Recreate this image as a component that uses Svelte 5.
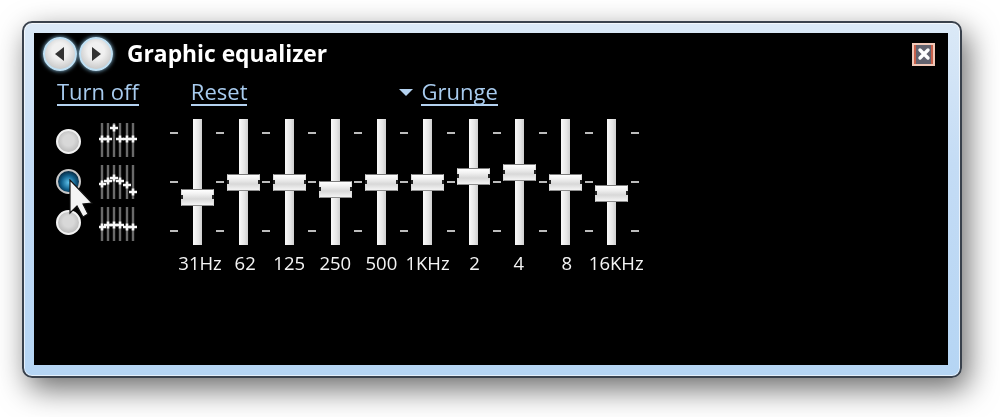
<script>
  // slider tops are px from the top of the track
  const bands = [
    { label: "31Hz", top: 70, nudge: 3 },
    { label: "62", top: 55, nudge: 2 },
    { label: "125", top: 55, nudge: 0 },
    { label: "250", top: 62, nudge: 0 },
    { label: "500", top: 55, nudge: 0 },
    { label: "1KHz", top: 55, nudge: 0 },
    { label: "2", top: 49, nudge: 1 },
    { label: "4", top: 45, nudge: -1 },
    { label: "8", top: 55, nudge: 1 },
    { label: "16KHz", top: 66, nudge: 0 }
  ];

  const presets = [
    { on: false, points: [16, 16, 5, 16, 16, 16] },
    { on: true, points: [19, 16, 13, 16, 20, 27] },
    { on: false, points: [20, 18, 18, 18, 20, 20] }
  ];

  const lineX = [3, 9, 15, 21, 28, 34];
</script>

<div class="page">
  <div class="window">
    <div class="pane">
      <header class="header">
        <div class="nav">
          <button class="round" aria-label="Back">
            <svg width="12" height="16" viewBox="0 0 12 16"><path d="M10 1 L1 8 L10 15 Z" fill="#333" /></svg>
          </button>
          <button class="round" aria-label="Forward">
            <svg width="12" height="16" viewBox="0 0 12 16"><path d="M2 1 L11 8 L2 15 Z" fill="#333" /></svg>
          </button>
        </div>
        <h1 class="title">Graphic equalizer</h1>
        <button class="close" aria-label="Close">
          <svg width="14" height="14" viewBox="0 0 14 14">
            <path d="M3 3 L11 11 M11 3 L3 11" stroke="#fff" stroke-width="3.4" stroke-linecap="round" />
          </svg>
        </button>
      </header>

      <nav class="links">
        <span class="link off">Turn off</span>
        <span class="link reset">Reset</span>
        <span class="arrow"></span>
        <span class="link">Grunge</span>
      </nav>

      <div class="body">
        <div class="presets">
          {#each presets as p}
            <div class="preset">
              <span class="radio" class:on={p.on}></span>
              <svg class="mini" width="38" height="34" viewBox="0 0 38 34">
                {#each lineX as x}
                  <rect x={x - 1.2} y="0" width="2.4" height="34" fill="#6a6a6a" />
                {/each}
                {#each lineX as x, i}
                  <path d="M{x - 4} {p.points[i]} H{x + 4} M{x} {p.points[i] - 3.5} V{p.points[i] + 3.5}" stroke="#f6f6f6" stroke-width="2.6" />
                {/each}
              </svg>
            </div>
          {/each}
        </div>

        <div class="eq">
          <div class="tracks">
            {#each bands as b}
              <div class="ticks"><i></i><i></i><i></i></div>
              <div class="slider">
                <div class="track"></div>
                <div class="thumb" style="top: {b.top}px"></div>
              </div>
            {/each}
            <div class="ticks"><i></i><i></i><i></i></div>
          </div>
          <div class="labels">
            {#each bands as b}
              <span class="label" style="transform: translateX({b.nudge}px)">{b.label}</span>
            {/each}
          </div>
        </div>
      </div>

      <svg class="cursor" width="26" height="40" viewBox="0 0 26 40">
        <path d="M2 1 L2 34 L9 27 L15 38 L20 35 L15 25 L24 24 Z" fill="#f4f4f4" stroke="#111" stroke-width="1.2" />
      </svg>
    </div>
  </div>
</div>

<style>
  :global(body) {
    margin: 0;
    background: #fff;
  }

  .page {
    box-sizing: border-box;
    height: 417px;
    padding: 21px 0 0 22px;
    overflow: hidden;
  }

  .window {
    box-sizing: border-box;
    width: 940px;
    height: 357px;
    padding: 10px 12px 11px 10px;
    background: linear-gradient(to bottom, #dbe9f7 0, #c4dcf5 40%, #b5d5f4 100%);
    border: 2px solid #39414c;
    border-radius: 10px;
    box-shadow: 6px 11px 30px rgba(0, 0, 0, 0.58), inset 0 0 0 1px rgba(255, 255, 255, 0.65);
    filter: blur(0.45px);
  }

  .pane {
    position: relative;
    box-sizing: border-box;
    height: 100%;
    background: #000;
    font-family: "Open Sans", "Liberation Sans", sans-serif;
    color: #fff;
    overflow: hidden;
  }

  /* --- header --- */
  .header {
    display: flex;
    align-items: center;
    height: 34px;
    padding: 4px 13px 0 9px;
  }
  .nav { display: flex; gap: 2px; }
  .round {
    display: flex;
    align-items: center;
    justify-content: center;
    box-sizing: border-box;
    width: 34px;
    height: 34px;
    padding: 0;
    border: 2px solid #bfe0f4;
    border-radius: 50%;
    background: radial-gradient(circle at 50% 40%, #f0f0f0 35%, #c2c2c2 85%);
    box-shadow: 0 0 4px #8fc8ea;
  }
  .title {
    margin: 0 0 0 14px;
    font-size: 22.8px;
    font-weight: 700;
    line-height: 34px;
    white-space: nowrap;
  }
  .close {
    display: flex;
    align-items: center;
    justify-content: center;
    box-sizing: border-box;
    width: 23px;
    height: 23px;
    margin-left: auto;
    padding: 0;
    border: 2px solid #f0c8b8;
    background: #62626e;
    box-shadow: inset 2px 0 0 #c8604a, inset -2px 0 0 #c8604a;
  }

  /* --- links --- */
  .links {
    display: flex;
    align-items: center;
    height: 26px;
    margin-top: 8px;
    padding-left: 23px;
  }
  .link {
    font-size: 22px;
    line-height: 25px;
    color: #a8cbee;
    border-bottom: 2px solid #b4d2f0;
    white-space: nowrap;
  }
  .off { margin-right: 52px; }
  .reset { margin-right: 152px; }
  .arrow {
    width: 0;
    height: 0;
    margin-right: 8px;
    border-left: 7px solid transparent;
    border-right: 7px solid transparent;
    border-top: 7px solid #b4d2f0;
  }

  /* --- preset column --- */
  .body {
    display: flex;
    margin-top: 14px;
  }
  .presets {
    display: flex;
    flex-direction: column;
    gap: 8px;
    width: 136px;
    padding: 4px 0 0 22px;
    box-sizing: border-box;
  }
  .preset {
    display: flex;
    align-items: center;
    gap: 18px;
  }
  .preset:nth-child(1) .radio { transform: translateY(1px); }
  .preset:nth-child(2) .radio { transform: translateY(-1px); }
  .preset:nth-child(3) .radio { transform: translateY(-2px); }
  .radio {
    box-sizing: border-box;
    width: 25px;
    height: 25px;
    border: 2px solid #f2f2f2;
    border-radius: 50%;
    background: radial-gradient(circle at 50% 45%, #d8d8d8 35%, #b8b8b8 80%);
  }
  .radio.on {
    background: radial-gradient(circle at 50% 55%, #5cc0ea 0, #10608c 45%, #0a2f48 70%);
    border-color: #c8c8c8;
  }

  /* --- sliders --- */
  .tracks { display: flex; }
  .ticks {
    display: flex;
    flex-direction: column;
    justify-content: space-between;
    box-sizing: border-box;
    width: 8px;
    height: 126px;
    padding: 13px 0;
  }
  .ticks i {
    display: block;
    height: 2px;
    background: #bcbcbc;
  }
  .slider {
    position: relative;
    display: flex;
    justify-content: center;
    width: 38.1px;
    height: 126px;
  }
  .track {
    width: 9px;
    height: 100%;
    background: linear-gradient(to right, #fafafa, #e6e6e6 60%, #cfcfcf);
  }
  .thumb {
    position: absolute;
    left: 2.5px;
    box-sizing: border-box;
    width: 33px;
    height: 17px;
    border: 1px solid #ddd;
    border-top-color: #7c7c7c;
    border-bottom-color: #8c8c8c;
    background: linear-gradient(to bottom, #fff, #f2f2f2 25%, #d8d8d8 60%, #f4f4f4);
  }
  .thumb::before,
  .thumb::after {
    content: "";
    position: absolute;
    top: 5px;
    width: 2px;
    height: 4px;
    background: #222;
  }
  .thumb::before { left: -1px; }
  .thumb::after { right: -1px; }

  .labels {
    display: flex;
    margin-top: 6px;
    padding-left: 4px;
  }
  .label {
    width: 46.1px;
    font-size: 18.5px;
    line-height: 24px;
    text-align: center;
    white-space: nowrap;
    color: #f4f4f4;
  }

  /* mouse pointer sitting over the second radio */
  .cursor {
    position: absolute;
    left: 34px;
    top: 146px;
  }
</style>
